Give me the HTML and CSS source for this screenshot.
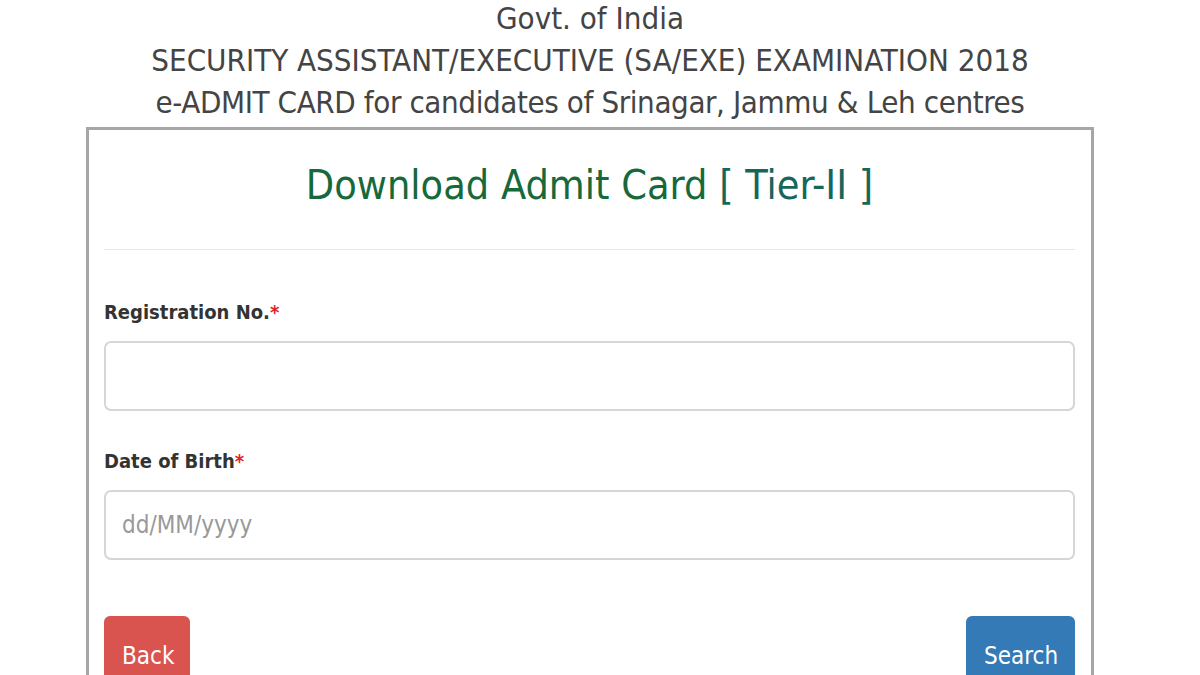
FILE: index.html
```html
<!DOCTYPE html>
<html lang="en">
<head>
    <meta charset="UTF-8">
    <meta name="viewport" content="width=device-width, initial-scale=1.0">
    <title>e-Admit Card</title>
    <link rel="stylesheet" href="styles.css">
</head>
<body>
    <div class="page">
        <div class="page-header">
            <div>Govt. of India</div>
            <div>SECURITY ASSISTANT/EXECUTIVE (SA/EXE) EXAMINATION 2018</div>
            <div class="centres">e-ADMIT CARD for candidates of Srinagar, Jammu &amp; Leh centres</div>
        </div>

        <div class="admit-box">
            <h1 class="box-title">Download Admit Card <span class="tier">[ Tier-II ]</span></h1>
            <hr class="divider">

            <div class="form-group">
                <label class="form-label" for="regNo">Registration No.<span class="req">*</span></label>
                <input type="text" class="form-input" id="regNo">
            </div>

            <div class="form-group">
                <label class="form-label" for="dob">Date of Birth<span class="req">*</span></label>
                <input type="text" class="form-input" id="dob" placeholder="dd/MM/yyyy">
            </div>

            <div class="button-row">
                <button class="btn btn-back">Back</button>
                <button class="btn btn-search">Search</button>
            </div>
        </div>
    </div>
</body>
</html>
```

FILE: styles.css
```css
body {
    font-family: "DejaVu Sans Condensed", "DejaVu Sans", Verdana, sans-serif;
    background-color: #fff;
    margin: 0;
    padding: 0;
}

.page {
    width: 1008px;
    margin-left: 86px;
}

.page-header {
    text-align: center;
    color: #444;
    font-size: 31px;
    line-height: 42px;
    margin-top: -3px;
    margin-bottom: 4px;
}

.centres {
    letter-spacing: -0.4px;
}

.admit-box {
    border: 3px solid #a6a6a6;
    border-bottom: none;
    padding: 0 16px 0 15px;
    height: 600px;
}

.box-title {
    font-weight: normal;
    text-align: center;
    color: #16693a;
    font-size: 41px;
    margin: 27px 0 0;
    line-height: 56px;
}

.tier {
    color: #17665a;
}

.divider {
    border: none;
    border-top: 1px solid #e6e6e6;
    margin: 36px 0 0;
}

.form-group {
    margin-top: 50px;
}

.form-group + .form-group {
    margin-top: 38px;
}

.form-label {
    display: block;
    font-weight: bold;
    color: #333;
    font-size: 20px;
    margin-bottom: 17px;
}

.req {
    color: #e3212b;
}

.form-input {
    display: block;
    box-sizing: border-box;
    width: 100%;
    height: 70px;
    border: 2px solid #d6d6d6;
    border-radius: 7px;
    padding: 0 16px;
    font-family: inherit;
    font-size: 24px;
    color: #555;
}

.form-input::placeholder {
    color: #999;
}

.button-row {
    display: flex;
    justify-content: space-between;
    margin-top: 56px;
}

.btn {
    font-family: inherit;
    font-size: 24px;
    color: #fff;
    border: none;
    border-radius: 6px;
    height: 72px;
    padding: 8px 18px 0;
}

.btn-back {
    background-color: #d9534f;
    width: 86px;
}

.btn-search {
    background-color: #337ab7;
    width: 109px;
}
```
